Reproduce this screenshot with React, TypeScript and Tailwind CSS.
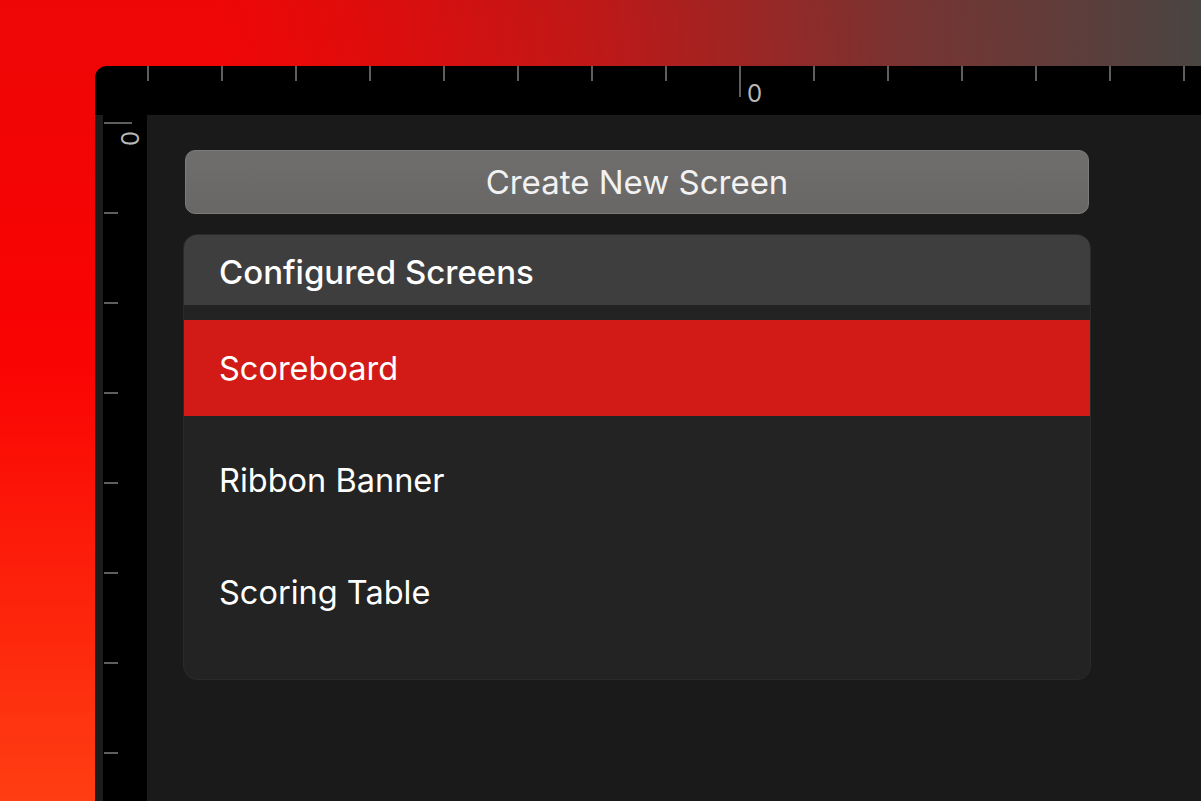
import React from "react";

const screens = ["Scoreboard", "Ribbon Banner", "Scoring Table"];

function TopRuler() {
  const ticks = Array.from({ length: 15 }, (_, i) => 53 + i * 74);
  return (
    <svg width="1106" height="49" className="block shrink-0">
      {ticks.map((x, i) => (
        <line
          key={x}
          x1={x}
          x2={x}
          y1={0}
          y2={i === 8 ? 31 : 15}
          stroke="#5e5e5e"
          strokeWidth={2}
        />
      ))}
      <text x={652} y={36} fill="#b8b8b8" fontSize={24} fontFamily="Inter, sans-serif">
        0
      </text>
    </svg>
  );
}

function LeftRuler() {
  const ticks = Array.from({ length: 8 }, (_, i) => 8 + i * 90);
  return (
    <div className="flex shrink-0 h-full">
      <div className="w-[8px] bg-[#1c1c1c]" />
      <svg width="44" height="686" className="block">
        {ticks.map((y, i) => (
          <line
            key={y}
            x1={1}
            x2={i === 0 ? 29 : 15}
            y1={y}
            y2={y}
            stroke="#5e5e5e"
            strokeWidth={2}
          />
        ))}
        <text
          x={0}
          y={0}
          fill="#b8b8b8"
          fontSize={24}
          fontFamily="Inter, sans-serif"
          transform="translate(18 16) rotate(90)"
        >
          0
        </text>
      </svg>
    </div>
  );
}

export default function App() {
  return (
    <div
      className="w-[1201px] h-[801px] overflow-hidden pl-[95px] pt-[66px] bg-[linear-gradient(to_right,rgba(74,69,66,0)_18%,rgba(74,69,66,0.12)_33%,rgba(74,69,66,0.3)_50%,rgba(74,69,66,0.72)_75%,#4a4542_100%),linear-gradient(to_bottom,#ee0606_0%,#fa0303_45%,#ff3e12_100%)]"
      style={{ fontFamily: "Inter, 'Noto Sans', sans-serif" }}
    >
      <div className="h-full bg-black rounded-tl-[12px] overflow-hidden flex flex-col">
        <TopRuler />
        <div className="flex flex-1">
          <LeftRuler />
          <div className="flex-1 bg-[#1a1a1a] pl-[36px] pt-[35px]">
            <div className="w-[908px] flex flex-col gap-[20px]">
              <button className="mx-[2px] h-[64px] rounded-[10px] border border-[#7c7b79] bg-gradient-to-b from-[#6f6e6c] to-[#686765] text-[33px] text-[#f2f2f2] pt-[2px]">
                Create New Screen
              </button>
              <div className="rounded-[14px] border border-[#2a2a2a] bg-[#232323] overflow-hidden">
                <div className="h-[70px] bg-[#3e3e3e] flex items-center pl-[35px] pt-[5px] text-[33px] font-medium text-white">
                  Configured Screens
                </div>
                <div className="flex flex-col gap-4 pt-[15px] pb-[39px]">
                  {screens.map((s, i) => (
                    <div
                      key={s}
                      className={
                        "h-[96px] flex items-center pl-[35px] pt-[3px] text-[32.5px] text-white " +
                        (i === 0 ? "bg-[#d21b16]" : "")
                      }
                    >
                      {s}
                    </div>
                  ))}
                </div>
              </div>
            </div>
          </div>
        </div>
      </div>
    </div>
  );
}
